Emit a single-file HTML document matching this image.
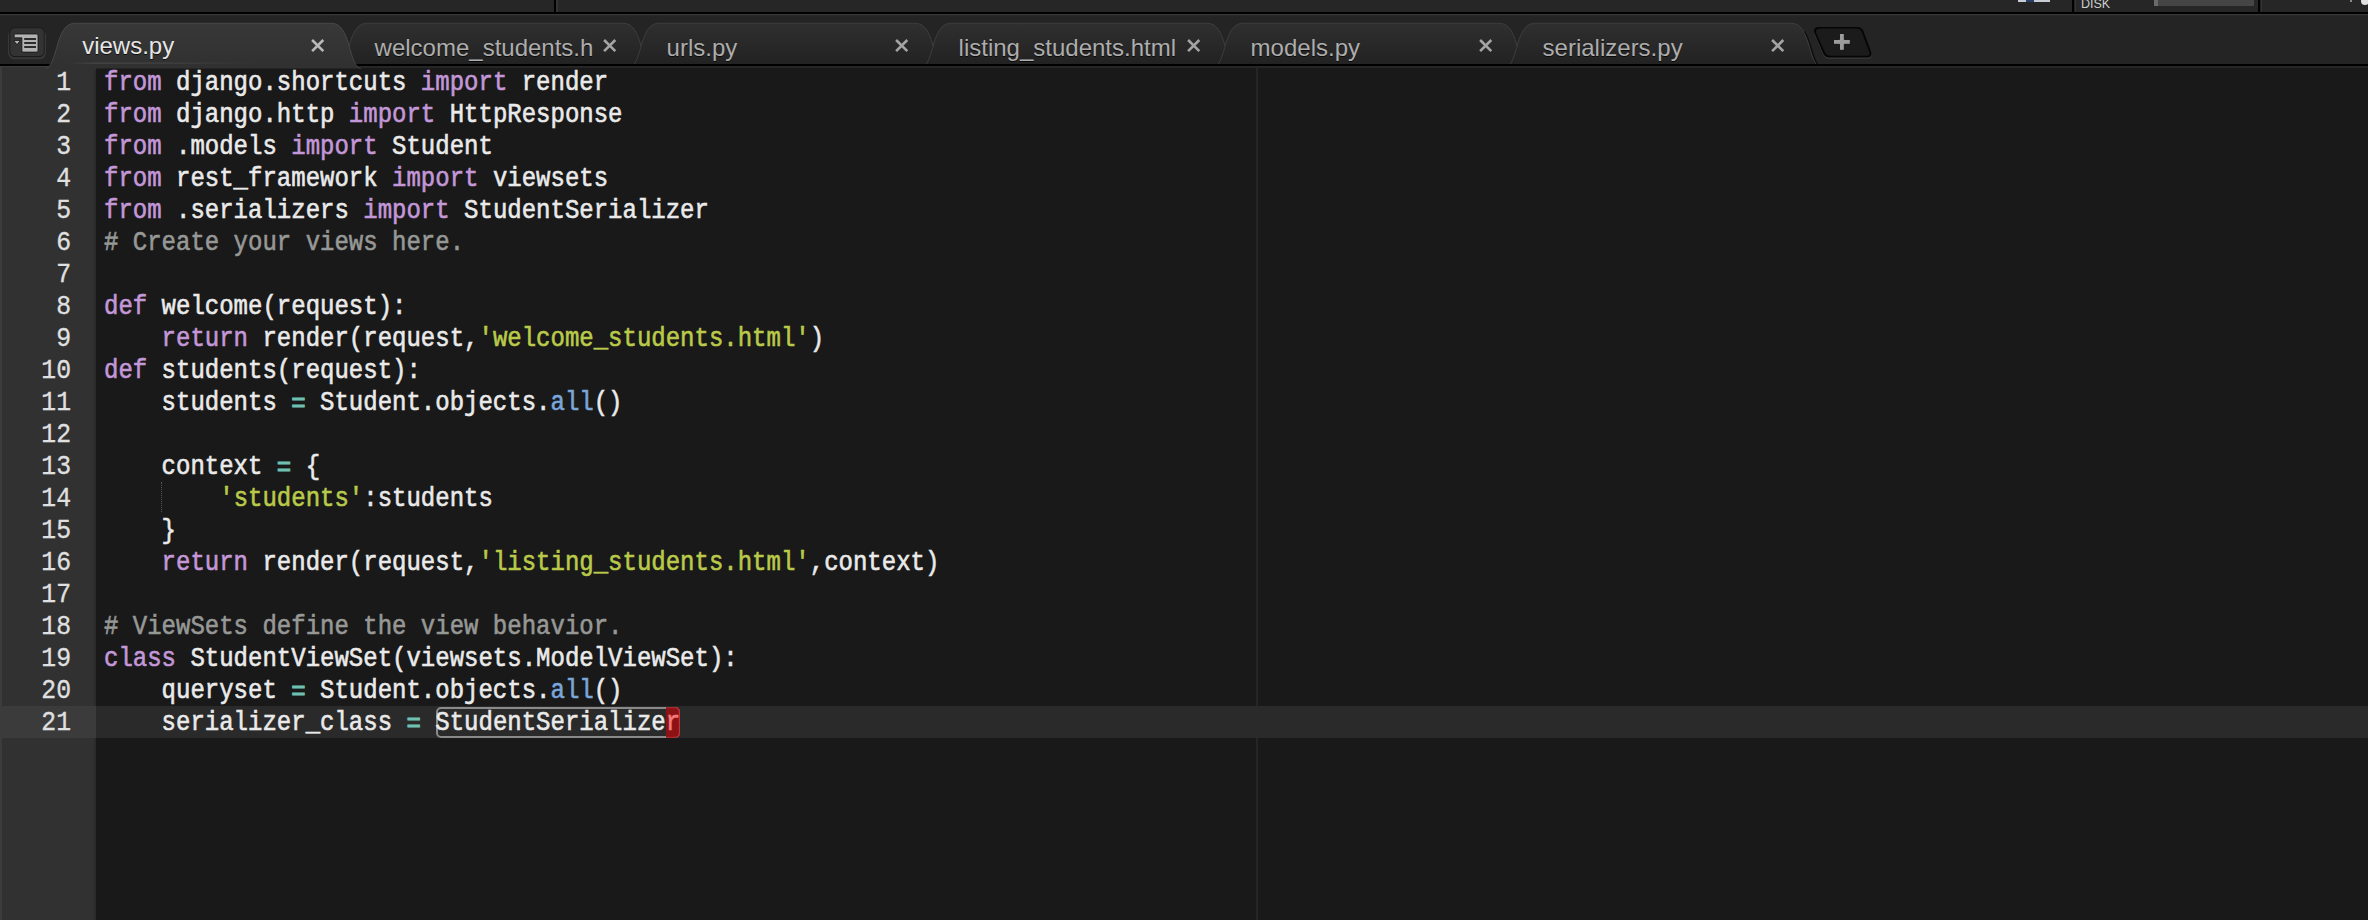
<!DOCTYPE html>
<html><head><meta charset="utf-8">
<style>
html,body{margin:0;padding:0;}
body{width:2368px;height:920px;overflow:hidden;position:relative;background:#242424;font-family:"Liberation Sans",sans-serif;}
.abs{position:absolute;}
#gutter{left:0;top:66px;width:96px;height:854px;background:#313131;}
#gutleft{left:0;top:66px;width:2px;height:854px;background:#3c3c3c;}
#gutshadow{left:94px;top:66px;width:2px;height:854px;background:#2b2b2b;}
#editor{left:96px;top:66px;width:2272px;height:854px;background:#191919;}
#ruler{left:1256px;top:66px;width:2px;height:854px;background:#252525;}
#curline{left:96px;top:706px;width:2272px;height:32px;background:#2a2a2a;}
#curgut{left:0;top:706px;width:96px;height:32px;background:#3b3b3b;}
#selbox{left:436px;top:706.5px;width:240px;height:27.5px;border:2px solid #8a8a8a;border-radius:5px;}
#cursor{left:665.6px;top:706.5px;width:14.4px;height:31.4px;background:#8c1216;border-radius:0 5px 5px 0;box-shadow:inset -1.2px 0 0 #b8383c, inset 0 1.2px 0 #a82a2e, inset 0 -1.2px 0 #a82a2e;}
.ln{position:absolute;left:0;width:71px;text-align:right;transform-origin:71px 0;transform:scaleX(0.917);font-family:"Liberation Mono",monospace;font-size:27px;color:#e0e0e0;height:32px;line-height:32px;-webkit-text-stroke:0.3px currentColor;}
.cl{position:absolute;left:104px;white-space:pre;font-family:"Liberation Mono",monospace;font-size:27px;color:#eaeaea;height:32px;line-height:32px;transform-origin:0 0;transform:scaleX(0.8889);-webkit-text-stroke:0.6px currentColor;}
.k{color:#c397d8}.s{color:#b9ca4a}.c{color:#969896}.o{color:#70c0b1;position:relative;top:1.5px;-webkit-text-stroke:1.1px currentColor}.b{color:#7aa6da}.cur{color:#f47a7a}
#guide{left:161px;top:482px;width:1px;height:30px;border-left:1px dotted #555;}
</style></head><body>
<div id="gutter" class="abs"></div>
<div id="gutleft" class="abs"></div>
<div id="gutshadow" class="abs"></div>
<div id="editor" class="abs"></div>
<div id="ruler" class="abs"></div>
<div id="curgut" class="abs"></div>
<div id="curline" class="abs"></div>
<div id="guide" class="abs"></div>
<div id="selbox" class="abs"></div>
<div id="cursor" class="abs"></div>
<svg class="abs" style="left:0;top:0" width="2368" height="70" viewBox="0 0 2368 70">
<defs><linearGradient id="ga" x1="0" y1="0" x2="0" y2="1"><stop offset="0" stop-color="#383838"/><stop offset="1" stop-color="#303030"/></linearGradient><linearGradient id="gi" x1="0" y1="0" x2="0" y2="1"><stop offset="0" stop-color="#2f2f2f"/><stop offset="1" stop-color="#212121"/></linearGradient><linearGradient id="gh" x1="0" y1="0" x2="1" y2="0"><stop offset="0" stop-color="#454545" stop-opacity="0"/><stop offset="0.15" stop-color="#484848"/><stop offset="0.6" stop-color="#404040"/><stop offset="1" stop-color="#404040" stop-opacity="0"/></linearGradient><clipPath id="cb"><rect x="0" y="0" width="2368" height="64"/></clipPath><clipPath id="cs"><rect x="0" y="31" width="2368" height="33"/></clipPath></defs>
<rect x="0" y="0" width="2368" height="12" fill="#262626"/>
<rect x="0" y="12" width="2368" height="2" fill="#000"/>
<rect x="0" y="14" width="2368" height="1.5" fill="#383838"/>
<rect x="0" y="15.5" width="2368" height="48.5" fill="#242424"/>
<rect x="0" y="64" width="2368" height="2" fill="#000"/>
<rect x="96" y="66" width="2272" height="2" fill="#262626"/>
<rect x="0" y="66" width="96" height="4" fill="#313131"/><rect x="0" y="66" width="2" height="4" fill="#3c3c3c"/><rect x="0" y="66" width="48" height="1.2" fill="#3c3c3c"/>
<rect x="554" y="0" width="2" height="12" fill="#000"/><rect x="556" y="0" width="2" height="12" fill="#333"/>
<rect x="2018" y="0" width="32" height="2" fill="#c8ccd4"/><rect x="2026" y="0" width="8" height="2" fill="#2a3e6a"/>
<rect x="2072" y="0" width="2.5" height="12" fill="#000"/><rect x="2074.5" y="0" width="1.5" height="12" fill="#333"/>
<text x="2081" y="8" font-family="Liberation Sans" font-size="12.5" fill="#cfcfcf">DISK</text>
<rect x="2154" y="0" width="100" height="6" fill="#454545"/><rect x="2154" y="0" width="4" height="6" fill="#6a6a6a"/>
<rect x="2258" y="0" width="2.5" height="12" fill="#000"/><rect x="2260.5" y="0" width="1.5" height="12" fill="#333"/>
<ellipse cx="2365" cy="1" rx="4" ry="4" fill="#e0e0e0"/><circle cx="2351" cy="1" r="1" fill="#aaa"/>
<rect x="8" y="29" width="38" height="30.3" rx="6.5" fill="#383838"/>
<rect x="9.3" y="27.3" width="35.4" height="30" rx="5.5" fill="#1c1c1c"/>
<rect x="10.3" y="28.2" width="33.5" height="27.8" rx="4.5" fill="#333333"/>
<g fill="#b2b2b2" stroke="#151515" stroke-width="0.8"><path d="M14.2,34 H36.3 Q38,34 38,35.7 V50.4 Q38,52.1 36.3,52.1 H23.5 Q21.9,52.1 21.9,50.4 V37.8 H14.2 Z"/><path d="M13.6,40.5 H20.4 L17,44.6 Z"/></g>
<g fill="#0a0a0a"><rect x="24.2" y="38.2" width="11.8" height="1.6"/><rect x="24.2" y="42.2" width="11.8" height="1.6"/><rect x="24.2" y="46.2" width="11.8" height="1.6"/></g>
<path d="M337.50,67.5 C343.50,67.0 346.50,55 350.00,43 C353.00,33 357.50,23.3 366.50,23.3 L623.70,23.3 C632.70,23.3 637.20,33 640.20,43 C643.70,55 646.70,67.0 652.70,67.5 Z" fill="url(#gi)" stroke="#3d3d3d" stroke-width="1" clip-path="url(#cb)"/>
<path d="M629.50,67.5 C635.50,67.0 638.50,55 642.00,43 C645.00,33 649.50,23.3 658.50,23.3 L915.70,23.3 C924.70,23.3 929.20,33 932.20,43 C935.70,55 938.70,67.0 944.70,67.5 Z" fill="url(#gi)" stroke="#3d3d3d" stroke-width="1" clip-path="url(#cb)"/>
<path d="M921.50,67.5 C927.50,67.0 930.50,55 934.00,43 C937.00,33 941.50,23.3 950.50,23.3 L1207.70,23.3 C1216.70,23.3 1221.20,33 1224.20,43 C1227.70,55 1230.70,67.0 1236.70,67.5 Z" fill="url(#gi)" stroke="#3d3d3d" stroke-width="1" clip-path="url(#cb)"/>
<path d="M1213.50,67.5 C1219.50,67.0 1222.50,55 1226.00,43 C1229.00,33 1233.50,23.3 1242.50,23.3 L1499.70,23.3 C1508.70,23.3 1513.20,33 1516.20,43 C1519.70,55 1522.70,67.0 1528.70,67.5 Z" fill="url(#gi)" stroke="#3d3d3d" stroke-width="1" clip-path="url(#cb)"/>
<path d="M1505.50,67.5 C1511.50,67.0 1514.50,55 1518.00,43 C1521.00,33 1525.50,23.3 1534.50,23.3 L1791.70,23.3 C1800.70,23.3 1805.20,33 1808.20,43 C1811.70,55 1814.70,67.0 1820.70,67.5 Z" fill="url(#gi)" stroke="#3d3d3d" stroke-width="1" clip-path="url(#cb)"/>
<path d="M1791.70,23.3 C1800.70,23.3 1805.20,33 1808.20,43 C1811.70,55 1814.70,66.5 1820.70,67" fill="none" stroke="#0e0e0e" stroke-width="1.3" transform="translate(1.6,0.6)" clip-path="url(#cs)"/>
<path d="M45.50,68.5 C51.50,68.0 54.50,55 58.00,43 C61.00,33 65.50,23.3 74.50,23.3 L331.70,23.3 C340.70,23.3 345.20,33 348.20,43 C351.70,55 354.70,68.0 360.70,68.5 Z" fill="url(#ga)"/>
<path d="M45.50,68.5 C51.50,68.0 54.50,55 58.00,43 C61.00,33 65.50,23.3 74.50,23.3 L331.70,23.3 C340.70,23.3 345.20,33 348.20,43 C351.70,55 354.70,68.0 360.70,68.5" fill="none" stroke="#474747" stroke-width="1"/>
<rect x="66" y="62.5" width="190" height="1.2" fill="url(#gh)"/>
<text x="82.2" y="54" font-family="Liberation Sans" font-size="24" fill="#000" opacity="0.7" transform="translate(0,1.2)">views.py</text>
<text x="82.2" y="54" font-family="Liberation Sans" font-size="24" fill="#e6e6e6">views.py</text>
<text x="374.6" y="56" font-family="Liberation Sans" font-size="24" fill="#000" opacity="0.7" transform="translate(0,1.2)">welcome_students.h</text>
<text x="374.6" y="56" font-family="Liberation Sans" font-size="24" fill="#adadad">welcome_students.h</text>
<text x="666.6" y="56" font-family="Liberation Sans" font-size="24" fill="#000" opacity="0.7" transform="translate(0,1.2)">urls.py</text>
<text x="666.6" y="56" font-family="Liberation Sans" font-size="24" fill="#adadad">urls.py</text>
<text x="958.6" y="56" font-family="Liberation Sans" font-size="24" fill="#000" opacity="0.7" transform="translate(0,1.2)">listing_students.html</text>
<text x="958.6" y="56" font-family="Liberation Sans" font-size="24" fill="#adadad">listing_students.html</text>
<text x="1250.6" y="56" font-family="Liberation Sans" font-size="24" fill="#000" opacity="0.7" transform="translate(0,1.2)">models.py</text>
<text x="1250.6" y="56" font-family="Liberation Sans" font-size="24" fill="#adadad">models.py</text>
<text x="1542.6" y="56" font-family="Liberation Sans" font-size="24" fill="#000" opacity="0.7" transform="translate(0,1.2)">serializers.py</text>
<text x="1542.6" y="56" font-family="Liberation Sans" font-size="24" fill="#adadad">serializers.py</text>
<path d="M312.1,40.0 L323.3,51.2 M323.3,40.0 L312.1,51.2" stroke="#b8b8b8" stroke-width="2.6" stroke-linecap="butt"/>
<path d="M604.1,40.0 L615.3,51.2 M615.3,40.0 L604.1,51.2" stroke="#a4a4a4" stroke-width="2.6" stroke-linecap="butt"/>
<path d="M896.1,40.0 L907.3,51.2 M907.3,40.0 L896.1,51.2" stroke="#a4a4a4" stroke-width="2.6" stroke-linecap="butt"/>
<path d="M1188.1,40.0 L1199.3,51.2 M1199.3,40.0 L1188.1,51.2" stroke="#a4a4a4" stroke-width="2.6" stroke-linecap="butt"/>
<path d="M1480.1,40.0 L1491.3,51.2 M1491.3,40.0 L1480.1,51.2" stroke="#a4a4a4" stroke-width="2.6" stroke-linecap="butt"/>
<path d="M1772.1,40.0 L1783.3,51.2 M1783.3,40.0 L1772.1,51.2" stroke="#a4a4a4" stroke-width="2.6" stroke-linecap="butt"/>
<path d="M1819,27 H1857 Q1862,27 1863.6,31.5 L1871.2,52 Q1872.6,57.5 1867,57.5 H1829 Q1825,57.5 1823.2,53.5 L1814.2,32.5 Q1812.8,27 1819,27 Z" fill="#3a3a3a" transform="translate(0,1.3)"/>
<path d="M1819,27 H1857 Q1862,27 1863.6,31.5 L1871.2,52 Q1872.6,57.5 1867,57.5 H1829 Q1825,57.5 1823.2,53.5 L1814.2,32.5 Q1812.8,27 1819,27 Z" fill="#050505"/>
<path d="M1820,28.6 H1856.5 Q1860.6,28.6 1862,32.5 L1869.4,52.4 Q1870.4,55.8 1866.2,55.8 H1830 Q1826.6,55.8 1825,52.6 L1816.2,33.2 Q1815,28.6 1820,28.6 Z" fill="#1b1b1b"/>
<g fill="#9c9c9c" stroke="#0a0a0a" stroke-width="0.8"><path d="M1839.5,33.5 H1844.3 V39.5 H1850.3 V44.3 H1844.3 V50.3 H1839.5 V44.3 H1833.5 V39.5 H1839.5 Z"/></g>
</svg>
<div class="ln" style="top:67px">1</div>
<div class="cl" style="top:67px"><span class="k">from</span> django.shortcuts <span class="k">import</span> render</div>
<div class="ln" style="top:99px">2</div>
<div class="cl" style="top:99px"><span class="k">from</span> django.http <span class="k">import</span> HttpResponse</div>
<div class="ln" style="top:131px">3</div>
<div class="cl" style="top:131px"><span class="k">from</span> .models <span class="k">import</span> Student</div>
<div class="ln" style="top:163px">4</div>
<div class="cl" style="top:163px"><span class="k">from</span> rest_framework <span class="k">import</span> viewsets</div>
<div class="ln" style="top:195px">5</div>
<div class="cl" style="top:195px"><span class="k">from</span> .serializers <span class="k">import</span> StudentSerializer</div>
<div class="ln" style="top:227px">6</div>
<div class="cl" style="top:227px"><span class="c"># Create your views here.</span></div>
<div class="ln" style="top:259px">7</div>
<div class="cl" style="top:259px"></div>
<div class="ln" style="top:291px">8</div>
<div class="cl" style="top:291px"><span class="k">def</span> welcome(request):</div>
<div class="ln" style="top:323px">9</div>
<div class="cl" style="top:323px">    <span class="k">return</span> render(request,<span class="s">'welcome_students.html'</span>)</div>
<div class="ln" style="top:355px">10</div>
<div class="cl" style="top:355px"><span class="k">def</span> students(request):</div>
<div class="ln" style="top:387px">11</div>
<div class="cl" style="top:387px">    students <span class="o">=</span> Student.objects.<span class="b">all</span>()</div>
<div class="ln" style="top:419px">12</div>
<div class="cl" style="top:419px"></div>
<div class="ln" style="top:451px">13</div>
<div class="cl" style="top:451px">    context <span class="o">=</span> {</div>
<div class="ln" style="top:483px">14</div>
<div class="cl" style="top:483px">        <span class="s">'students'</span>:students</div>
<div class="ln" style="top:515px">15</div>
<div class="cl" style="top:515px">    }</div>
<div class="ln" style="top:547px">16</div>
<div class="cl" style="top:547px">    <span class="k">return</span> render(request,<span class="s">'listing_students.html'</span>,context)</div>
<div class="ln" style="top:579px">17</div>
<div class="cl" style="top:579px"></div>
<div class="ln" style="top:611px">18</div>
<div class="cl" style="top:611px"><span class="c"># ViewSets define the view behavior.</span></div>
<div class="ln" style="top:643px">19</div>
<div class="cl" style="top:643px"><span class="k">class</span> StudentViewSet(viewsets.ModelViewSet):</div>
<div class="ln" style="top:675px">20</div>
<div class="cl" style="top:675px">    queryset <span class="o">=</span> Student.objects.<span class="b">all</span>()</div>
<div class="ln" style="top:707px">21</div>
<div class="cl" style="top:707px">    serializer_class <span class="o">=</span> StudentSerialize<span class="cur">r</span></div>
</body></html>
